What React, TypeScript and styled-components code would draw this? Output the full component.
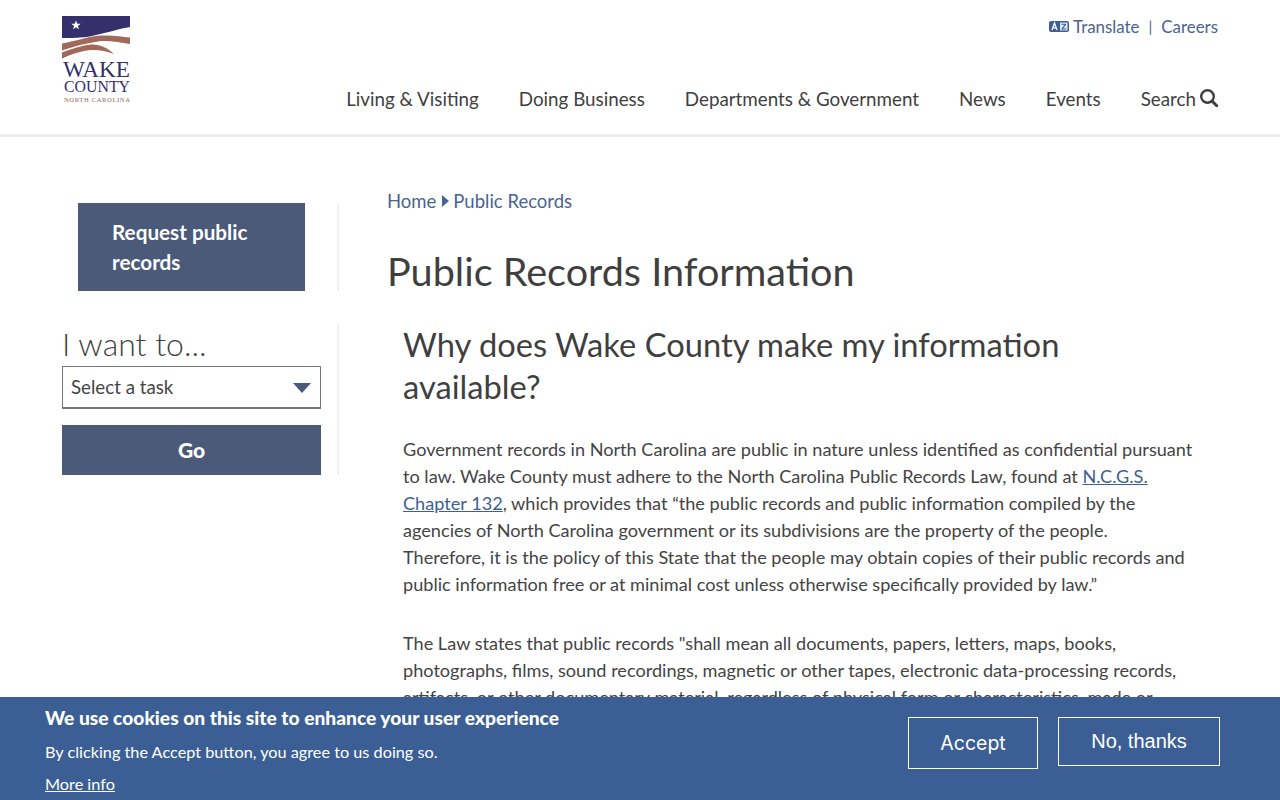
import React from "react";
import styled, { createGlobalStyle } from "styled-components";

const Global = createGlobalStyle`
  html, body { margin: 0; padding: 0; background: #fff; }
  html { height: 800px; overflow: hidden; }
  body { height: 800px; overflow: hidden; font-family: "Lato", "Liberation Sans", sans-serif; color: #3f3f3f; }
`;

const Page = styled.div`
  position: relative;
  width: 1280px;
  height: 800px;
  overflow: hidden;
`;

const Header = styled.header`
  height: 134px;
  border-bottom: 3px solid #eeeeee;
  display: flex;
  justify-content: space-between;
  padding: 0 62px;
`;

const LogoLink = styled.a`
  display: block;
  width: 69px;
  height: 88px;
  margin-top: 16px;
`;

const HeaderRight = styled.div`
  display: flex;
  flex-direction: column;
  align-items: flex-end;
`;

const TopLinks = styled.div`
  display: flex;
  align-items: center;
  margin-top: 16px;
  height: 20px;
  font-size: 16.9px;
  color: #4a6491;
`;

const TopLink = styled.a`
  color: #4a6491;
  display: inline-flex;
  align-items: center;
  gap: 4px;
`;

const Pipe = styled.span`
  margin: 0 9px;
  font-size: 15px;
  color: #4a6491;
`;

const Nav = styled.nav`
  display: flex;
  gap: 40px;
  margin-top: 51px;
  font-size: 18.8px;
  line-height: 24px;
  color: #3f3f3f;
`;

const NavItem = styled.a`
  color: #3f3f3f;
  display: inline-flex;
  align-items: center;
  gap: 4px;
  svg {
    margin-top: -2px;
  }
`;

const Content = styled.div`
  display: flex;
  padding: 66px 62px 0;
`;

const Sidebar = styled.aside`
  width: 277px;
  flex: none;
  display: flex;
  flex-direction: column;
  gap: 32px;
`;

const SideSection = styled.div<{ $inset?: boolean }>`
  border-right: 2px solid #f2f2f2;
  padding-left: ${(p) => (p.$inset ? "16px" : "0")};
  padding-right: ${(p) => (p.$inset ? "32px" : "16px")};
`;

const SideButton = styled.a`
  display: block;
  background: #4a5a78;
  color: #fff;
  font-size: 20.7px;
  font-weight: 700;
  line-height: 30px;
  padding: 14px 34px;
  height: 88px;
  box-sizing: border-box;
`;

const WantTitle = styled.div`
  font-size: 32px;
  font-weight: 300;
  line-height: 43px;
  margin-top: -1px;
  margin-bottom: 1px;
  color: #3f3f3f;
`;

const SelectBox = styled.div`
  height: 43px;
  box-sizing: border-box;
  border: 1px solid #777;
  border-bottom-width: 2px;
  display: flex;
  align-items: center;
  justify-content: space-between;
  padding: 0 9px 1px 8px;
  font-size: 18.7px;
  color: #444;
`;

const Caret = styled.span`
  width: 0;
  height: 0;
  margin-top: 3px;
  border-left: 9px solid transparent;
  border-right: 9px solid transparent;
  border-top: 10px solid #4a5a78;
`;

const GoButton = styled.button`
  display: block;
  width: 100%;
  height: 50px;
  margin-top: 16px;
  padding: 0 0 1px;
  border: 0;
  background: #4a5a78;
  color: #fff;
  font-family: inherit;
  font-size: 21px;
  font-weight: 900;
`;

const Main = styled.main`
  flex: 1;
  padding-left: 48px;
  min-width: 0;
`;

const Breadcrumb = styled.div`
  display: flex;
  align-items: center;
  font-size: 18.5px;
  line-height: 24px;
  margin-top: -14px;
  color: #4a6491;
`;

const Crumb = styled.a`
  color: #4a6491;
`;

const CrumbArrow = styled.span`
  width: 0;
  height: 0;
  margin: 0 4px 0 6px;
  border-top: 6px solid transparent;
  border-bottom: 6px solid transparent;
  border-left: 7px solid #4a6491;
`;

const PageTitle = styled.h1`
  margin: 34px 0 0;
  font-size: 39.6px;
  font-weight: 400;
  line-height: 48px;
  color: #3f3f3f;
`;

const Article = styled.article`
  margin-top: 29px;
  padding-left: 16px;
  width: 790px;
`;

const SectionTitle = styled.h2`
  margin: 0;
  font-size: 32.7px;
  font-weight: 400;
  line-height: 42px;
  color: #3f3f3f;
`;

const Para = styled.p`
  margin: 0 0 32px;
  font-size: 18.14px;
  line-height: 27px;
  color: #444;
`;

const Lead = styled(Para)`
  margin-top: 28px;
`;

const TextLink = styled.a`
  color: #3c5f94;
  text-decoration: underline;
`;

const Cookie = styled.div`
  position: absolute;
  left: 0;
  right: 0;
  bottom: 0;
  height: 103px;
  background: #3b5f94;
  color: #fff;
`;

const CookieText = styled.div`
  position: absolute;
  left: 45px;
  top: 9px;
`;

const CookieTitle = styled.div`
  font-size: 19.2px;
  font-weight: 900;
  line-height: 24px;
`;

const CookieLine = styled.div`
  font-size: 16.25px;
  line-height: 24px;
  margin-top: 10px;
`;

const CookieMore = styled.a`
  display: block;
  font-size: 16.25px;
  line-height: 24px;
  margin-top: 8px;
  color: #fff;
  text-decoration: underline;
`;

const CookieButton = styled.button<{ $w: number; $h: number; $left: number; $sans?: boolean }>`
  position: absolute;
  left: ${(p) => p.$left}px;
  top: 20px;
  width: ${(p) => p.$w}px;
  height: ${(p) => p.$h}px;
  background: transparent;
  border: 1px solid #fff;
  color: #fff;
  font-size: ${(p) => (p.$sans ? "20px" : "19.5px")};
  font-family: ${(p) => (p.$sans ? '"Liberation Sans", sans-serif' : '"Inter", sans-serif')};
  padding: 0 0 ${(p) => (p.$sans ? "1px" : "0")};
`;

const Logo = () => (
  <svg width="69" height="88" viewBox="0 0 69 88" role="img" aria-label="Wake County logo">
    <path d="M0 0H68V11C56 13 44 17 30 20C20 22 8 22 0 22Z" fill="#35306c" />
    <path d="M14 4.500l1.300 3.300h3.400l-2.800 2.100 1.100 3.400-3-2-3 2 1.100-3.400-2.800-2.100h3.400z" fill="#fff" />
    <path d="M0 27.500C14 25 26 20.500 39 19.500C50 19 60 20.500 68 21.500V28C58 26 48 24.500 39 25C26 27 12 30 0 34.500Z" fill="#a0695a" />
    <path d="M0 42.500V36.500C10 32.500 20 29.500 29 28.500C38 28 46 32 52 38C44 35 36 33.500 29 34C18 35 8 39 0 42.500Z" fill="#a0695a" />
    <text x="1" y="61" fontFamily="Liberation Serif" fontSize="24" fill="#35306c" textLength="67" lengthAdjust="spacingAndGlyphs">WAKE</text>
    <text x="2" y="75.500" fontFamily="Liberation Serif" fontSize="16" fill="#35306c" textLength="66" lengthAdjust="spacingAndGlyphs">COUNTY</text>
    <text x="2" y="86" fontFamily="Liberation Serif" fontSize="6.600" fill="#8f6a5e" textLength="66" lengthAdjust="spacing">NORTH CAROLINA</text>
  </svg>
);

const TranslateIcon = () => (
  <svg width="20" height="11" viewBox="0 0 20 11">
    <rect x="0" y="0" width="20" height="11" rx="2" fill="#3b5f94" />
    <rect x="11" y="1.500" width="7.500" height="8" fill="#dfe6f0" />
    <path d="M3 9L5.500 2L8 9M3.900 6.900H7.100" stroke="#fff" strokeWidth="1.300" fill="none" />
    <path d="M12.500 3.300H17M16.500 3.300L13 8H17.200" stroke="#3b5f94" strokeWidth="1.100" fill="none" />
  </svg>
);

const SearchIcon = () => (
  <svg width="18" height="18" viewBox="0 0 18 18">
    <circle cx="7.500" cy="7.500" r="6.300" fill="none" stroke="#3f3f3f" strokeWidth="2.400" />
    <path d="M12 12L17 17" stroke="#3f3f3f" strokeWidth="3" strokeLinecap="round" />
  </svg>
);

export default function App() {
  return (
    <Page>
      <Global />
      <Header>
        <LogoLink><Logo /></LogoLink>
        <HeaderRight>
          <TopLinks>
            <TopLink><TranslateIcon />Translate</TopLink>
            <Pipe>|</Pipe>
            <TopLink>Careers</TopLink>
          </TopLinks>
          <Nav>
            <NavItem>Living &amp; Visiting</NavItem>
            <NavItem>Doing Business</NavItem>
            <NavItem>Departments &amp; Government</NavItem>
            <NavItem>News</NavItem>
            <NavItem>Events</NavItem>
            <NavItem>Search<SearchIcon /></NavItem>
          </Nav>
        </HeaderRight>
      </Header>
      <Content>
        <Sidebar>
          <SideSection $inset>
            <SideButton>Request public records</SideButton>
          </SideSection>
          <SideSection>
            <WantTitle>I want to...</WantTitle>
            <SelectBox>Select a task<Caret /></SelectBox>
            <GoButton>Go</GoButton>
          </SideSection>
        </Sidebar>
        <Main>
          <Breadcrumb>
            <Crumb>Home</Crumb>
            <CrumbArrow />
            <Crumb>Public Records</Crumb>
          </Breadcrumb>
          <PageTitle>Public Records Information</PageTitle>
          <Article>
            <SectionTitle>Why does Wake County make my information available?</SectionTitle>
            <Lead>
              Government records in North Carolina are public in nature unless identified as confidential pursuant to law. Wake County must adhere to the North Carolina Public Records Law, found at <TextLink>N.C.G.S. Chapter 132</TextLink>, which provides that “the public records and public information compiled by the agencies of North Carolina government or its subdivisions are the property of the people. Therefore, it is the policy of this State that the people may obtain copies of their public records and public information free or at minimal cost unless otherwise specifically provided by law.”
            </Lead>
            <Para>
              The Law states that public records "shall mean all documents, papers, letters, maps, books, photographs, films, sound recordings, magnetic or other tapes, electronic data-processing records, artifacts, or other documentary material, regardless of physical form or characteristics, made or received pursuant to law or ordinance in connection with the transaction of public business.
            </Para>
          </Article>
        </Main>
      </Content>
      <Cookie>
        <CookieText>
          <CookieTitle>We use cookies on this site to enhance your user experience</CookieTitle>
          <CookieLine>By clicking the Accept button, you agree to us doing so.</CookieLine>
          <CookieMore>More info</CookieMore>
        </CookieText>
        <CookieButton $left={908} $w={130} $h={52}>Accept</CookieButton>
        <CookieButton $left={1058} $w={162} $h={49} $sans>No, thanks</CookieButton>
      </Cookie>
    </Page>
  );
}
